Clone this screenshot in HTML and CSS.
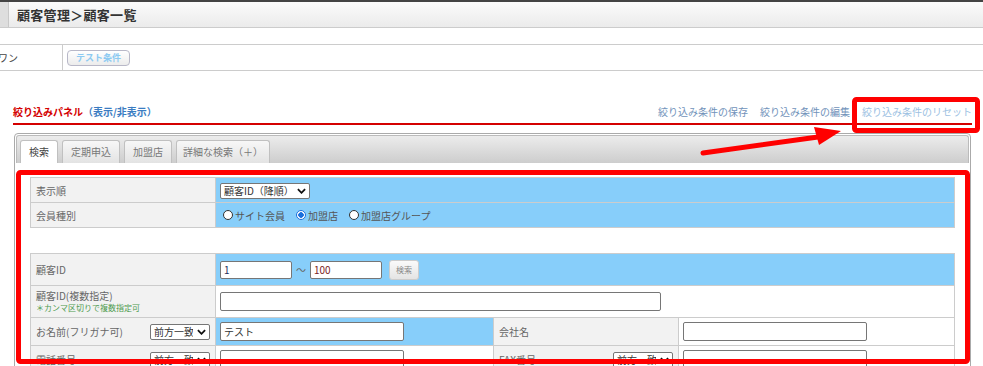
FILE: index.html
```html
<!DOCTYPE html>
<html>
<head>
  <title>顧客一覧</title>
  <meta name="viewport" content="width=device-width, initial-scale=1">
  <link rel="stylesheet" href="styles.css">
</head>
<body>
  <div class="topbar"></div>
  <header class="page-head">
    <span class="page-head-mark"></span>
    <h1>顧客管理＞顧客一覧</h1>
  </header>

  <div class="pattern-row">
    <div class="pattern-label"><span>ワン</span></div>
    <div class="pattern-body">
      <button class="pattern-btn" type="button">テスト条件</button>
    </div>
  </div>

  <section class="panel">
    <div class="panel-head">
      <h2>絞り込みパネル<a class="panel-toggle">（表示/非表示）</a></h2>
      <nav class="panel-links">
        <a>絞り込み条件の保存</a>
        <a>絞り込み条件の編集</a>
        <a class="reset">絞り込み条件のリセット</a>
      </nav>
    </div>

    <div class="tabs-box">
      <ul class="tabs">
        <li class="active">検索</li>
        <li>定期申込</li>
        <li>加盟店</li>
        <li>詳細な検索（＋）</li>
      </ul>

      <div class="tab-body">
        <table class="cond cond-sort">
          <colgroup><col class="c-label"><col></colgroup>
          <tr>
            <th>表示順</th>
            <td class="blue">
              <span class="sel sel-order">
                <select><option>顧客ID（降順）</option></select>
                <svg viewBox="0 0 10 6"><path d="M1 1l4 4 4-4"/></svg>
              </span>
            </td>
          </tr>
          <tr>
            <th>会員種別</th>
            <td class="blue">
              <div class="radios">
                <label><input type="radio" name="kind">サイト会員</label>
                <label><input type="radio" name="kind" checked>加盟店</label>
                <label><input type="radio" name="kind">加盟店グループ</label>
              </div>
            </td>
          </tr>
        </table>

        <table class="cond cond-main">
          <colgroup><col class="c-label"><col class="c-val"><col class="c-label"><col></colgroup>
          <tr class="r-tall">
            <th>顧客ID</th>
            <td class="blue" colspan="3">
              <div class="range">
                <input class="num num-from" type="text" value="1">
                <span class="tilde">～</span>
                <input class="num num-to" type="text" value="100">
                <button class="search-btn" type="button">検索</button>
              </div>
            </td>
          </tr>
          <tr class="r-tall">
            <th>
              <div class="label-main">顧客ID(複数指定)</div>
              <div class="label-note">＊カンマ区切りで複数指定可</div>
            </th>
            <td colspan="3"><input class="txt txt-wide" type="text"></td>
          </tr>
          <tr class="r-mid">
            <th>
              <div class="label-sel">
                <span>お名前(フリガナ可)</span>
                <span class="sel sel-match">
                  <select><option>前方一致</option></select>
                  <svg viewBox="0 0 10 6"><path d="M1 1l4 4 4-4"/></svg>
                </span>
              </div>
            </th>
            <td class="blue"><input class="txt" type="text" value="テスト"></td>
            <th>会社名</th>
            <td><input class="txt" type="text"></td>
          </tr>
          <tr class="r-mid">
            <th>
              <div class="label-sel">
                <span>電話番号</span>
                <span class="sel sel-match">
                  <select><option>前方一致</option></select>
                  <svg viewBox="0 0 10 6"><path d="M1 1l4 4 4-4"/></svg>
                </span>
              </div>
            </th>
            <td><input class="txt" type="text"></td>
            <th>
              <div class="label-sel">
                <span>FAX番号</span>
                <span class="sel sel-match">
                  <select><option>前方一致</option></select>
                  <svg viewBox="0 0 10 6"><path d="M1 1l4 4 4-4"/></svg>
                </span>
              </div>
            </th>
            <td><input class="txt" type="text"></td>
          </tr>
        </table>
      </div>
    </div>
  </section>

  <!-- annotation marks drawn over the screenshot -->
  <svg class="annot" width="983" height="366" viewBox="0 0 983 366">
    <rect x="854.5" y="99.5" width="123" height="31" rx="2"/>
    <rect x="18.5" y="172.5" width="949" height="189" rx="2"/>
    <line x1="703" y1="153" x2="818" y2="137"/>
    <polygon points="841,131 814,127 819,145"/>
  </svg>
</body>
</html>
```

FILE: styles.css
```css
:root {
  --border-color: #ccc;
  --label-bg: #f2f2f2;
  --blue-bg: #87cefa;
  --text-color: #555;
  --red: #d40000;
  --font-family: "Noto Sans CJK JP", "Noto Sans", sans-serif;
}

html, body {
  overflow: hidden;
}

body {
  position: relative;
  width: 983px;
  height: 366px;
  margin: 0;
  padding: 0;
  background: #fff;
  color: var(--text-color);
  font-family: var(--font-family);
  font-size: 10px;
}

.topbar {
  height: 2px;
  background: #444;
}

.page-head {
  display: flex;
  align-items: center;
  height: 25px;
  background: linear-gradient(#fbfbfb, #ebebeb);
  border-bottom: 1px solid var(--border-color);
}

.page-head-mark {
  align-self: stretch;
  width: 8px;
  background: #dedede;
  border-right: 1px solid #c8c8c8;
}

.page-head h1 {
  margin: 0 0 0 8px;
  font-size: 13px;
  font-weight: bold;
  color: #333;
  line-height: 1;
  letter-spacing: 0.3px;
}

.pattern-row {
  display: flex;
  height: 25px;
  margin-top: 16px;
  border-top: 1px solid var(--border-color);
  border-bottom: 1px solid var(--border-color);
}

.pattern-label {
  display: flex;
  align-items: center;
  width: 62px;
  border-right: 1px solid var(--border-color);
  overflow: hidden;
  white-space: nowrap;
  color: #444;
}

.pattern-label span {
  margin-left: -2px;
}

.pattern-body {
  display: flex;
  align-items: center;
  padding-left: 4px;
}

.pattern-btn {
  height: 16px;
  padding: 0 8px;
  border: 1px solid #b8b8c8;
  border-radius: 4px;
  background: linear-gradient(#fff, #ececec);
  color: #8ccaf2;
  font-family: var(--font-family);
  font-size: 9px;
  font-weight: bold;
  line-height: 14px;
}

.panel-head {
  display: flex;
  justify-content: space-between;
  align-items: flex-end;
  margin: 33px 11px 0 13px;
  padding-bottom: 3px;
  border-bottom: 2px solid var(--red);
  line-height: 16px;
}

.panel-head h2 {
  margin: 0;
  font-size: 10px;
  font-weight: bold;
  color: var(--red);
}

.panel-toggle {
  color: #3a7cc2;
}

.panel-links {
  display: flex;
  gap: 12px;
}

.panel-links a {
  color: #7192ba;
}

.panel-links a.reset {
  color: #9cbfe2;
}

.tabs-box {
  margin: 8px 12px 0 14px;
  padding: 1px;
  border: 1px solid #aaa;
  border-radius: 4px;
}

.tabs {
  display: flex;
  gap: 4px;
  margin: 0;
  padding: 4px 3px 0;
  list-style: none;
  background: linear-gradient(#ececec, #cdcdcd);
  border: 1px solid #bbb;
  border-bottom: 0;
  border-radius: 3px 3px 0 0;
}

.tabs li {
  height: 22px;
  padding: 0 8px;
  line-height: 22px;
  border: 1px solid #c0c0c0;
  border-bottom: 0;
  border-radius: 3px 3px 0 0;
  background: linear-gradient(#f7f7f7, #e3e3e3);
  color: #777;
}

.tabs li:last-child {
  padding: 0 6px;
}

.tabs li.active {
  background: #fff;
  color: #444;
}

.tab-body {
  padding: 14px 14px 20px;
}

.cond {
  width: 100%;
  border-collapse: collapse;
  table-layout: fixed;
}

.cond col.c-label {
  width: 185px;
}

.cond col.c-val {
  width: 278px;
}

.cond th,
.cond td {
  padding: 0 5px;
  border: 1px solid var(--border-color);
  text-align: left;
  vertical-align: middle;
}

.cond th {
  background: var(--label-bg);
  font-weight: normal;
  color: #666;
}

.cond td {
  background: #fff;
  padding-left: 4px;
}

.cond td.blue {
  background: var(--blue-bg);
}

.cond-sort {
  margin-bottom: 25px;
}

.cond-sort tr {
  height: 25px;
}

.cond-main tr.r-tall {
  height: 32px;
}

.cond-main tr.r-mid {
  height: 28px;
}

.sel {
  position: relative;
  display: inline-block;
  vertical-align: middle;
}

.sel select {
  display: block;
  height: 16px;
  padding: 0 16px 0 3px;
  border: 1px solid #767676;
  border-radius: 2px;
  background: #fff;
  color: #333;
  font-family: var(--font-family);
  font-size: 10px;
  line-height: 14px;
  -webkit-appearance: none;
  appearance: none;
}

.sel svg {
  position: absolute;
  top: 5px;
  right: 4px;
  width: 9px;
  height: 6px;
  fill: none;
  stroke: #111;
  stroke-width: 2;
}

.sel-order select {
  width: 90px;
}

.sel-match select {
  width: 60px;
}

.radios {
  display: flex;
  gap: 11px;
  padding-left: 3px;
  color: #555;
}

.radios label {
  display: flex;
  align-items: center;
  gap: 2px;
}

.radios input {
  width: 10px;
  height: 10px;
  margin: 0;
  border: 1px solid #333;
  border-radius: 50%;
  background: #fff;
  -webkit-appearance: none;
  appearance: none;
}

.radios input:checked {
  border-color: #1a6fdc;
  background: radial-gradient(circle, #1a6fdc 0 2.5px, #fff 3px);
}

.range {
  display: flex;
  align-items: center;
}

.num,
.txt {
  box-sizing: border-box;
  height: 19px;
  padding: 0 3px;
  border: 1px solid #767676;
  border-radius: 2px;
  background: #fff;
  font-family: var(--font-family);
  font-size: 10px;
  color: #333;
}

.num {
  width: 72px;
  height: 18px;
}

.num-from {
  color: #1e2f5c;
}

.num-to {
  color: #7a2424;
}

.tilde {
  margin: 0 4px;
  color: #666;
}

.search-btn {
  height: 20px;
  margin-left: 7px;
  padding: 0 6px;
  border: 1px solid #ccc;
  border-radius: 3px;
  background: linear-gradient(#fafafa, #e4e4e4);
  color: #888;
  font-family: var(--font-family);
  font-size: 8px;
}

.txt {
  display: block;
  width: 184px;
}

.txt-wide {
  width: 441px;
}

.label-main {
  line-height: 12px;
}

.label-note {
  line-height: 11px;
  font-size: 8px;
  color: #4e9a4e;
}

.label-sel {
  display: flex;
  justify-content: space-between;
  align-items: center;
}

.annot {
  position: absolute;
  top: 0;
  left: 0;
  pointer-events: none;
}

.annot rect {
  fill: none;
  stroke: #f00;
  stroke-width: 5;
}

.annot line {
  stroke: #f00;
  stroke-width: 5;
  stroke-linecap: round;
}

.annot polygon {
  fill: #f00;
}
```
